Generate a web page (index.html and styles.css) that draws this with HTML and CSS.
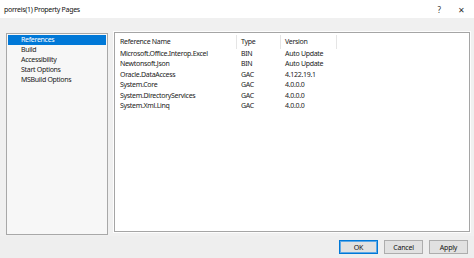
FILE: index.html
```html
<!DOCTYPE html>
<html>
<head>
<meta charset="utf-8">
<link rel="stylesheet" href="styles.css">
</head>
<body>
<div class="dialog">
  <div class="titlebar">
    <span class="title">porreis(1) Property Pages</span>
    <span class="tb-btns"><span class="help">?</span><span class="close">&#x2715;</span></span>
  </div>
  <div class="main">
    <ul class="nav">
      <li class="sel">References</li>
      <li>Build</li>
      <li>Accessibility</li>
      <li>Start Options</li>
      <li>MSBuild Options</li>
    </ul>
    <div class="panel">
      <div class="list">
        <div class="hd">Reference Name</div><div class="hd">Type</div><div class="hd">Version</div>
        <div>Microsoft.Office.Interop.Excel</div><div>BIN</div><div>Auto Update</div>
        <div>Newtonsoft.Json</div><div>BIN</div><div>Auto Update</div>
        <div>Oracle.DataAccess</div><div>GAC</div><div>4.122.19.1</div>
        <div>System.Core</div><div>GAC</div><div>4.0.0.0</div>
        <div>System.DirectoryServices</div><div>GAC</div><div>4.0.0.0</div>
        <div>System.Xml.Linq</div><div>GAC</div><div>4.0.0.0</div>
      </div>
    </div>
  </div>
  <div class="footer">
    <button class="btn def">OK</button>
    <button class="btn">Cancel</button>
    <button class="btn">Apply</button>
  </div>
</div>
</body>
</html>
```
FILE: styles.css
```css
* { box-sizing: border-box; }
html, body { margin: 0; padding: 0; }
body {
  width: 474px;
  height: 258px;
  overflow: hidden;
  font-family: "Noto Sans", "Open Sans", sans-serif;
  font-size: 7px;
  letter-spacing: -0.3px;
  color: #1a1a1a;
  background: #f0f0f0;
}
.dialog { width: 474px; height: 258px; display: flex; flex-direction: column; }
.titlebar {
  height: 18px;
  background: #fff;
  display: flex;
  align-items: center;
  justify-content: space-between;
  padding: 0 9px 0 4px;
}
.title { font-size: 7px; color: #111; }
.tb-btns { display: flex; gap: 17px; align-items: center; color: #333; letter-spacing: 0; }
.help { font-size: 8px; }
.close { font-size: 8px; font-weight: 300; }
.main {
  display: flex;
  align-items: flex-start;
  gap: 6px;
  padding: 14px 4px 0 6px;
  height: 218px;
}
.nav {
  list-style: none;
  margin: 1px 0 0 0;
  padding: 1px 0 0 1px;
  width: 102px;
  height: 202px;
  background: #f7f7f7;
  border: 1px solid #a8a8a8;
}
.nav li {
  height: 10px;
  line-height: 10px;
  padding-left: 13px;
  margin-right: 1px;
  white-space: nowrap;
}
.nav li.sel { background: #0078d7; color: #fff; }
.panel {
  width: 356px;
  height: 200px;
  border: 1px solid #a5a5a5;
  box-shadow: 0 0 0 1px #fdfdfd;
  background: #fff;
  padding: 2px 1px 1px 1px;
}
.list {
  display: grid;
  grid-template-columns: 121px 44px 56px;
  grid-template-rows: 14px;
  grid-auto-rows: 10.4px;
  line-height: 10.4px;
  white-space: nowrap;
}
.list > div { padding-left: 4px; }
.list .hd {
  line-height: 14px;
  border-right: 1px solid #e5e5e5;
  color: #222;
}
.footer {
  flex: 1;
  display: flex;
  justify-content: flex-end;
  align-items: flex-start;
  gap: 6px;
  padding: 4px 6px 0 0;
  background: #eeeeee;
}
.btn {
  width: 39px;
  height: 14px;
  padding: 0;
  font-family: inherit;
  font-size: 7px;
  letter-spacing: -0.2px;
  color: #111;
  background: #e1e1e1;
  border: 1px solid #adadad;
}
.btn.def { border: 1px solid #0078d7; box-shadow: inset 0 0 0 1px #5ea8e6; }
```
